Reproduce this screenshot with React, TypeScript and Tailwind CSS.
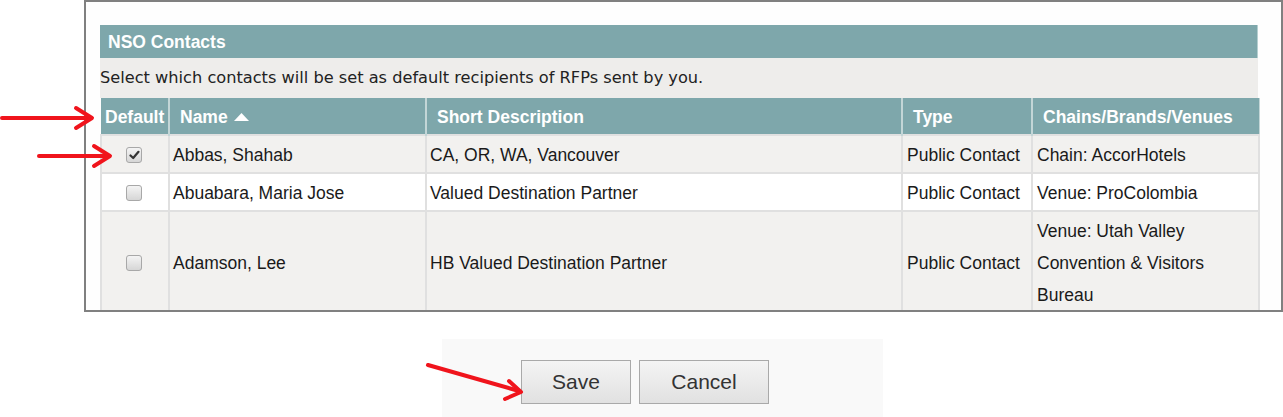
import React from 'react';

type Contact = {
  name: string;
  desc: string;
  type: string;
  chains: string;
  checked: boolean;
};

const contacts: Contact[] = [
  { name: 'Abbas, Shahab', desc: 'CA, OR, WA, Vancouver', type: 'Public Contact', chains: 'Chain: AccorHotels', checked: true },
  { name: 'Abuabara, Maria Jose', desc: 'Valued Destination Partner', type: 'Public Contact', chains: 'Venue: ProColombia', checked: false },
  { name: 'Adamson, Lee', desc: 'HB Valued Destination Partner', type: 'Public Contact', chains: 'Venue: Utah Valley Convention & Visitors Bureau', checked: false },
];

const Checkbox = ({ checked }: { checked: boolean }) => (
  <span className="ml-[24px] flex h-[16px] w-[16px] items-center justify-center rounded-[3px] border border-[#a8a8a8] bg-gradient-to-b from-[#f4f4f4] to-[#d6d6d6]">
    {checked && (
      <svg width="11" height="10" viewBox="0 0 11 10">
        <path d="M1.5 5.5 L4.2 8 L9.5 1.8" fill="none" stroke="#333" strokeWidth="2.2" strokeLinecap="round" strokeLinejoin="round" />
      </svg>
    )}
  </span>
);

const Arrows = () => (
  <svg className="pointer-events-none absolute inset-0" width="1283" height="417" viewBox="0 0 1283 417">
    <g fill="none" stroke="#f0141c" strokeWidth="4" strokeLinecap="round" strokeLinejoin="round">
      <path d="M2 118 L90 118" />
      <path d="M76 108 L92 118 L76 128" />
      <path d="M39 156 L108 156" />
      <path d="M94 146 L110 156 L94 166" />
      <path d="M428 365 L519 391" />
      <path d="M509 381 L521 392 L505 399" />
    </g>
  </svg>
);

export default function App() {
  const th = 'border-r-2 border-b border-[#c3d6d7] px-[10px] text-left font-bold text-white';

  return (
    <div className="relative h-[417px] w-[1283px] overflow-hidden bg-white">
      <div className="ml-[84px] h-[312px] w-[1199px] overflow-hidden border-2 border-[#808080] bg-[#fefefe] pt-[23px] pl-[14px]">
        <div className="w-[1158px]">
          <div className="flex h-[33px] items-center border-r border-[#b5cfd0] bg-[#7ea7ab] pl-[8px] pt-[2px] font-['Liberation_Sans',Arial,sans-serif] text-[17.5px] font-bold text-white">
            NSO Contacts
          </div>
          <div className="flex h-[40px] items-center bg-[#eeedeb] pt-[1px] font-['DejaVu_Sans',sans-serif] text-[16.2px] text-[#222]">
            Select which contacts will be set as default recipients of RFPs sent by you.
          </div>
        </div>
        <table className="w-[1158px] table-fixed border-collapse">
          <colgroup>
            <col className="w-[68px]" />
            <col className="w-[257px]" />
            <col className="w-[476px]" />
            <col className="w-[130px]" />
            <col className="w-[227px]" />
          </colgroup>
          <thead>
            <tr className="h-[37px] bg-[#7ea7ab] pt-[2px] font-['Liberation_Sans',Arial,sans-serif] text-[17.5px]">
              <th className="border-r-2 border-b border-[#c3d6d7] px-[4px] pt-[2px] text-left font-bold text-white">Default</th>
              <th className={th + ' pt-[2px]'}>
                <span className="flex items-center gap-[6px]">
                  Name
                  <svg width="15" height="8" viewBox="0 0 15 8">
                    <path d="M0 8 L7.5 0 L15 8 Z" fill="#fff" />
                  </svg>
                </span>
              </th>
              <th className={th + ' pt-[2px]'}>Short Description</th>
              <th className={th + ' pt-[2px]'}>Type</th>
              <th className="border-b border-r border-[#c3d6d7] px-[10px] pt-[2px] text-left font-bold text-white">Chains/Brands/Venues</th>
            </tr>
          </thead>
          <tbody className="font-['Liberation_Sans',Arial,sans-serif] text-[17.5px] leading-[32px] text-[#1a1a1a]">
            {contacts.map((c, i) => (
              <tr key={c.name} className={i % 2 === 0 ? 'bg-[#f2f1ef]' : 'bg-white'}>
                <td className="border-2 border-[#e0e0e0] pt-[3px] pb-[1px] align-middle">
                  <Checkbox checked={c.checked} />
                </td>
                <td className="border-2 border-[#e0e0e0] px-[3px] pt-[3px] pb-[1px]">{c.name}</td>
                <td className="border-2 border-[#e0e0e0] px-[3px] pt-[3px] pb-[1px]">{c.desc}</td>
                <td className="border-2 border-[#e0e0e0] px-[4px] pt-[3px] pb-[1px] whitespace-nowrap">{c.type}</td>
                <td className="border-2 border-[#e0e0e0] px-[4px] pt-[3px] pb-[1px]">{c.chains}</td>
              </tr>
            ))}
          </tbody>
        </table>
      </div>

      <div className="ml-[442px] mt-[27px] flex h-[78px] w-[441px] gap-[8px] bg-[#f9f9f9] pl-[79px] pt-[21px] font-['Liberation_Sans',Arial,sans-serif] text-[21px] text-[#333]">
        <button className="h-[44px] w-[110px] border border-[#a9a9a9] bg-gradient-to-b from-[#f4f4f4] to-[#e1e1e1]">Save</button>
        <button className="h-[44px] w-[130px] border border-[#a9a9a9] bg-gradient-to-b from-[#f4f4f4] to-[#e1e1e1]">Cancel</button>
      </div>

      <Arrows />
    </div>
  );
}
